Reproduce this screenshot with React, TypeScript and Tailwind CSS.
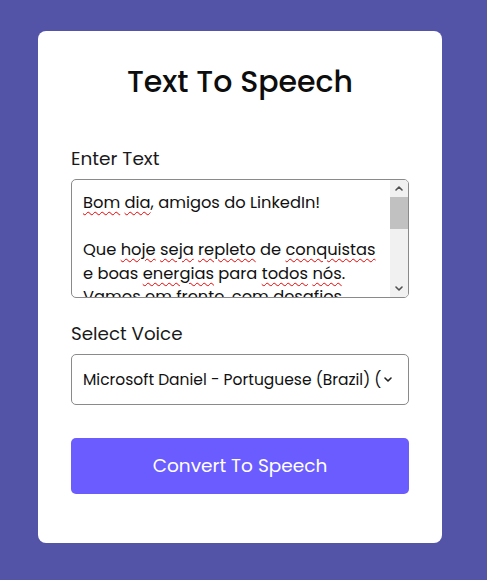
const font = { fontFamily: '"Poppins", Inter, "Noto Sans", sans-serif' };

const lines: Array<Array<[string, boolean]>> = [
  [["Bom", true], [" ", false], ["dia", true], [", amigos do LinkedIn!", false]],
  [],
  [["Que ", false], ["hoje", true], [" ", false], ["seja", true], [" ", false], ["repleto", true], [" de ", false], ["conquistas", true]],
  [["e boas ", false], ["energias", true], [" para ", false], ["todos", true], [" ", false], ["nós", true], [".", false]],
  [["Vamos em frente, com desafios", false]],
  [["e muita força de vontade!", false]],
];

function Chevron({ up = false, className = "" }: { up?: boolean; className?: string }) {
  return (
    <svg width="8" height="5" viewBox="0 0 8 5" className={className}>
      <path
        d={up ? "M1 4 L4 1 L7 4" : "M1 1 L4 4 L7 1"}
        fill="none"
        stroke="currentColor"
        strokeWidth="1.6"
        strokeLinecap="round"
        strokeLinejoin="round"
      />
    </svg>
  );
}

export default function App() {
  return (
    <div className="min-h-[580px] w-full bg-[#5354a8] pl-[38px] pt-[31px]" style={font}>
      <div className="flex h-[512px] w-[404px] flex-col rounded-lg bg-white px-[33px] pt-[33px]">
        <h1 className="text-center text-[30px] font-medium leading-9 text-[#0d0d0d]">Text To Speech</h1>

        <label className="mt-[47px] text-[18.5px] leading-6 text-[#1a1a1a]">Enter Text</label>
        <div className="mt-[8px] flex h-[119px] overflow-hidden rounded-[5px] border border-[#8a8a8a] text-[#111]">
          <div className="flex-1 overflow-hidden pl-[11px] pt-[11px] text-[16.3px] leading-[23.5px]">
            {lines.map((line, i) => (
              <div key={i} className="h-[23.5px] whitespace-nowrap">
                {line.map(([word, wavy], j) =>
                  wavy ? (
                    <span key={j} className="underline decoration-[#e00] decoration-wavy decoration-1 underline-offset-[3px]">
                      {word}
                    </span>
                  ) : (
                    <span key={j}>{word}</span>
                  )
                )}
              </div>
            ))}
          </div>
          <div className="flex w-[18px] flex-col items-center bg-[#f1f1f1] text-[#505050]">
            <div className="flex h-[17px] w-full items-center justify-center">
              <Chevron up />
            </div>
            <div className="h-[32px] w-full bg-[#c1c1c1]" />
            <div className="flex-1" />
            <div className="flex h-[17px] w-full items-center justify-center">
              <Chevron />
            </div>
          </div>
        </div>

        <label className="mt-[24px] text-[18.3px] leading-6 text-[#1a1a1a]">Select Voice</label>
        <div className="mt-[8px] flex h-[51px] items-center rounded-[5px] border border-[#8a8a8a] pl-[11px] pr-[16px] text-[15.5px] text-[#111]">
          <span className="whitespace-nowrap">Microsoft Daniel - Portuguese (Brazil) (</span>
          <Chevron className="ml-auto text-[#222]" />
        </div>

        <button className="mt-[33px] h-[56px] rounded-[5px] bg-[#6b5cff] text-[18.5px] text-white">
          Convert To Speech
        </button>
      </div>
    </div>
  );
}
